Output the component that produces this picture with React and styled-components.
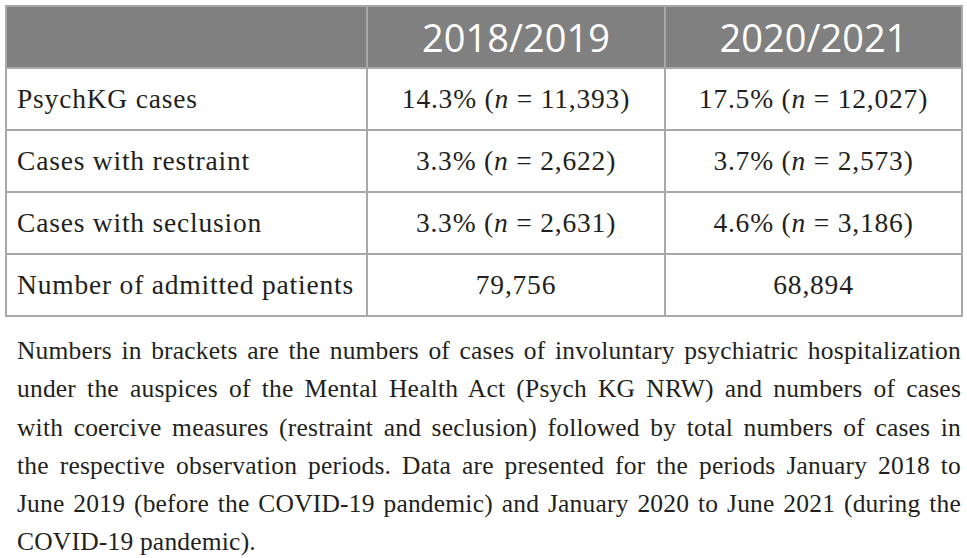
import styled, { createGlobalStyle } from "styled-components"

const GlobalStyle = createGlobalStyle`
  html, body {
    margin: 0;
    padding: 0;
    background: #ffffff;
  }
`

const Page = styled.main`
  width: 967px;
  padding: 5px 6px 0 5px;
  box-sizing: border-box;
`

const Table = styled.table`
  width: 956px;
  border-collapse: collapse;
  table-layout: fixed;
  font-family: "Liberation Serif", "Times New Roman", serif;
  color: #231f20;
`

const HeadCell = styled.th`
  height: 60px;
  padding: 0;
  background: #808080;
  border: 2px solid #a8a8a8;
  color: #ffffff;
  font-family: "Open Sans", "Liberation Sans", sans-serif;
  font-weight: 400;
  font-size: 38px;
  text-align: center;
  vertical-align: middle;
`

const Cell = styled.td`
  height: 60px;
  padding: 0 0 0 ${(p) => (p.$label ? "10px" : "0")};
  border: 2px solid #a8a8a8;
  font-size: 27.5px;
  letter-spacing: 0.8px;
  text-align: ${(p) => (p.$label ? "left" : "center")};
  vertical-align: middle;
  white-space: nowrap;
`

const Caption = styled.div`
  margin: 15px 0 0 12px;
  width: 944px;
  font-family: "Liberation Serif", "Times New Roman", serif;
  font-size: 25.5px;
  line-height: 38.3px;
  letter-spacing: 0.2px;
  color: #231f20;
`

const Line = styled.div`
  white-space: nowrap;
  text-align: justify;
  text-align-last: ${(p) => (p.$last ? "left" : "justify")};
`

const rows = [
  { label: "PsychKG cases", a: ["14.3%", "11,393"], b: ["17.5%", "12,027"] },
  { label: "Cases with restraint", a: ["3.3%", "2,622"], b: ["3.7%", "2,573"] },
  { label: "Cases with seclusion", a: ["3.3%", "2,631"], b: ["4.6%", "3,186"] },
  { label: "Number of admitted patients", a: "79,756", b: "68,894" },
]

const captionLines = [
  "Numbers in brackets are the numbers of cases of involuntary psychiatric hospitalization",
  "under the auspices of the Mental Health Act (Psych KG NRW) and numbers of cases",
  "with coercive measures (restraint and seclusion) followed by total numbers of cases in",
  "the respective observation periods. Data are presented for the periods January 2018 to",
  "June 2019 (before the COVID-19 pandemic) and January 2020 to June 2021 (during the",
  "COVID-19 pandemic).",
]

const Value = ({ v }) =>
  Array.isArray(v) ? (
    <>
      {v[0]} (<i>n</i> = {v[1]})
    </>
  ) : (
    v
  )

export default function App() {
  return (
    <>
      <GlobalStyle />
      <Page>
        <Table>
          <colgroup>
            <col style={{ width: 361 }} />
            <col style={{ width: 298 }} />
            <col style={{ width: 297 }} />
          </colgroup>
          <thead>
            <tr>
              <HeadCell />
              <HeadCell>2018/2019</HeadCell>
              <HeadCell>2020/2021</HeadCell>
            </tr>
          </thead>
          <tbody>
            {rows.map((r) => (
              <tr key={r.label}>
                <Cell $label>{r.label}</Cell>
                <Cell><Value v={r.a} /></Cell>
                <Cell><Value v={r.b} /></Cell>
              </tr>
            ))}
          </tbody>
        </Table>
        <Caption>
          {captionLines.map((t, i) => (
            <Line key={i} $last={i === captionLines.length - 1}>{t}</Line>
          ))}
        </Caption>
      </Page>
    </>
  )
}
